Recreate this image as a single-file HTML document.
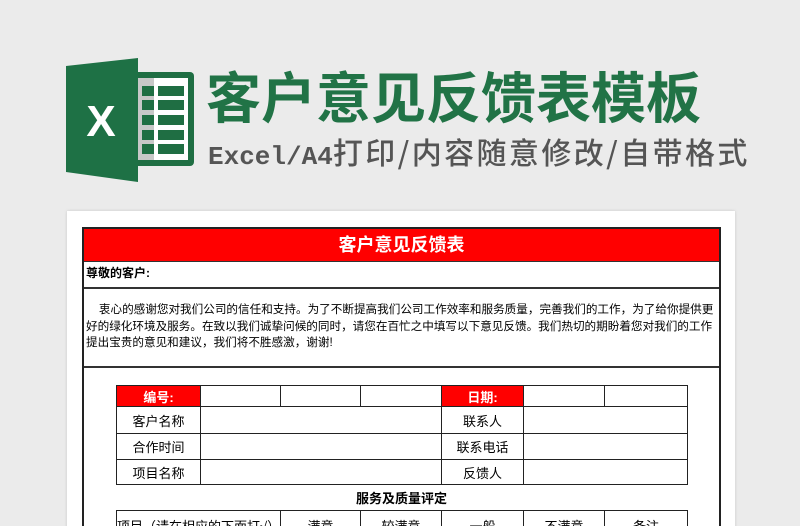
<!DOCTYPE html>
<html><head><meta charset="utf-8"><style>
*{margin:0;padding:0;box-sizing:border-box}
html,body{width:800px;height:526px;overflow:hidden}
body{background:#ebebeb;position:relative;font-family:"Liberation Sans","Noto Sans CJK SC",sans-serif}
.a{position:absolute}
.t1{left:206px;top:66px;font-size:55px;font-weight:bold;color:#217346;white-space:nowrap;line-height:66px}
.t2{left:208px;top:132px;color:#555;white-space:nowrap;line-height:38px}
.t2 .l{font-size:26px;font-family:"Liberation Mono",monospace;font-weight:bold}
.t2 .c{font-size:30px;letter-spacing:2.4px;font-family:"Noto Sans CJK SC",sans-serif;font-weight:500}
.paper{left:67px;top:211px;width:668px;height:320px;background:#fff;box-shadow:0 0 3px rgba(0,0,0,.15)}
.frame{left:82px;top:227px;width:639px;height:310px;border:2px solid #222;border-bottom:none}
.hdr{left:84px;top:229px;width:635px;height:32px;background:#f00;color:#fff;font-weight:bold;font-size:18px;text-align:center;line-height:32px}
.line{background:#333;height:1px;left:84px;width:635px}
.s{font-size:12px;color:#000}
table{position:absolute;border-collapse:collapse;font-size:13px;table-layout:fixed}
td{border:1px solid #222;text-align:center;padding:0}
.r{background:#f00;color:#fff;font-weight:bold}
</style></head><body>
<svg class="a" style="left:66px;top:58px" width="130" height="124" viewBox="0 0 130 124">
<rect x="64" y="14" width="64" height="94" rx="4" fill="#1f6e43"/>
<rect x="70" y="20" width="52" height="82" fill="#fff"/>
<rect x="70" y="20" width="18" height="82" fill="#c8c8c8"/>
<g fill="#1f6e43">
<rect x="76" y="28" width="12" height="10"/><rect x="92" y="28" width="26" height="10"/>
<rect x="76" y="42" width="12" height="10"/><rect x="92" y="42" width="26" height="10"/>
<rect x="76" y="57" width="12" height="10"/><rect x="92" y="57" width="26" height="10"/>
<rect x="76" y="72" width="12" height="10"/><rect x="92" y="72" width="26" height="10"/>
<rect x="76" y="86" width="12" height="10"/><rect x="92" y="86" width="26" height="10"/>
</g>
<polygon points="0,8 72,0 72,124 0,114" fill="#1e7145"/>
<text x="35" y="78" font-size="44" font-weight="bold" fill="#fff" text-anchor="middle" font-family="Liberation Sans">X</text>
</svg>
<div class="a t1">客户意见反馈表模板</div>
<div class="a t2"><span class="l">Excel/A4</span><span class="c">打印/内容随意修改/自带格式</span></div>
<div class="a paper"></div>
<div class="a frame"></div>
<div class="a hdr">客户意见反馈表</div>
<div class="a line" style="top:261px"></div>
<div class="a s" style="left:86px;top:265px;font-weight:bold;line-height:16px">尊敬的客户:</div>
<div class="a line" style="top:287px;height:2px"></div>
<div class="a s" style="left:86px;top:302px;width:632px;line-height:16.5px;font-size:11.6px">&nbsp;&nbsp;&nbsp;&nbsp;衷心的感谢您对我们公司的信任和支持。为了不断提高我们公司工作效率和服务质量，完善我们的工作，为了给你提供更好的绿化环境及服务。在致以我们诚挚问候的同时，请您在百忙之中填写以下意见反馈。我们热切的期盼着您对我们的工作提出宝贵的意见和建议，我们将不胜感激，谢谢!</div>
<div class="a line" style="top:366px;height:2px"></div>
<table style="left:116px;top:385px;width:571px">
<colgroup><col style="width:84px"><col style="width:80px"><col style="width:80px"><col style="width:81px"><col style="width:82px"><col style="width:81px"><col style="width:83px"></colgroup>
<tr style="height:21px"><td class="r">编号:</td><td></td><td></td><td></td><td class="r">日期:</td><td></td><td></td></tr>
<tr style="height:27px"><td>客户名称</td><td colspan="3"></td><td>联系人</td><td colspan="2"></td></tr>
<tr style="height:26px"><td>合作时间</td><td colspan="3"></td><td>联系电话</td><td colspan="2"></td></tr>
<tr style="height:25px"><td>项目名称</td><td colspan="3"></td><td>反馈人</td><td colspan="2"></td></tr>
</table>
<div class="a" style="left:84px;width:635px;top:488px;text-align:center;font-weight:bold;font-size:13px">服务及质量评定</div>
<table style="left:116px;top:510px;width:571px">
<colgroup><col style="width:164px"><col style="width:80px"><col style="width:81px"><col style="width:82px"><col style="width:81px"><col style="width:83px"></colgroup>
<tr style="height:26px;vertical-align:top"><td style="padding-top:5px">项目（请在相应的下面打√）</td><td style="padding-top:5px">满意</td><td style="padding-top:5px">较满意</td><td style="padding-top:5px">一般</td><td style="padding-top:5px">不满意</td><td style="padding-top:5px">备注</td></tr>
</table>
</body></html>
